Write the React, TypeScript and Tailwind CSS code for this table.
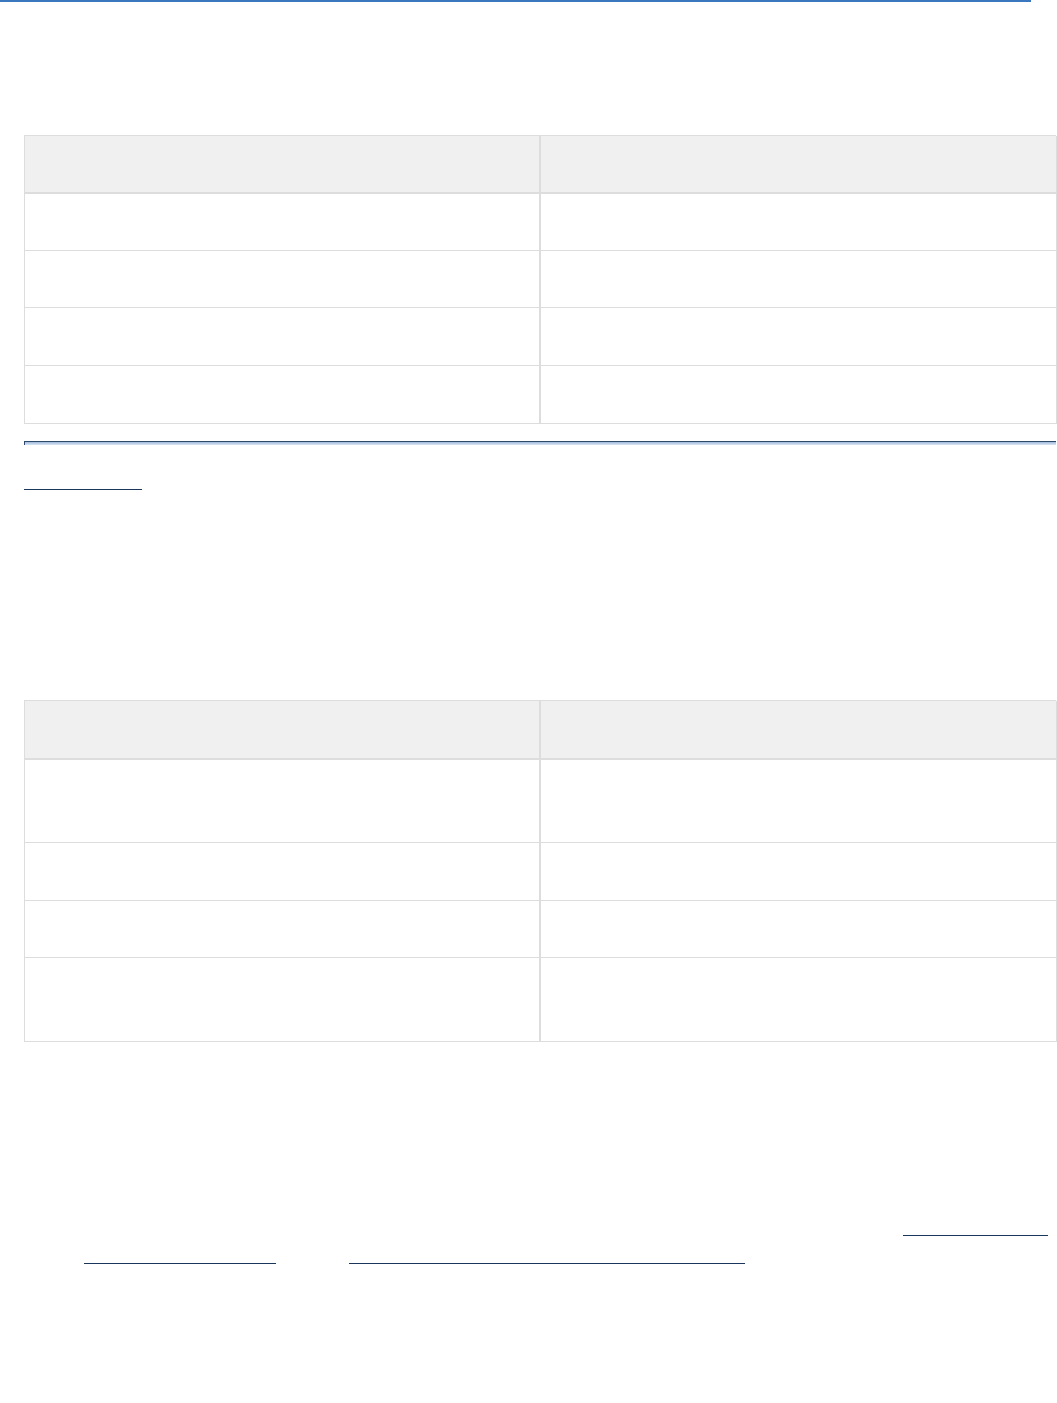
const table1 = {
  header: 'h-[58px]',
  rows: ['h-[57px]', 'h-[57px]', 'h-[58px]', 'h-[58px]'],
};

const table2 = {
  header: 'h-[59px]',
  rows: ['h-[83px]', 'h-[58px]', 'h-[57px]', 'h-[84px]'],
};

function DataTable({ header, rows }: { header: string; rows: string[] }) {
  return (
    <div className="w-[1032px] border-t border-l border-[#dddddd]">
      <div className="grid grid-cols-[516px_516px]">
        <div className={`${header} bg-[#f0f0f0] border-r-2 border-b-2 border-[#dddddd]`} />
        <div className={`${header} bg-[#f0f0f0] border-r border-b-2 border-[#dddddd]`} />
      </div>
      {rows.map((h, i) => (
        <div key={i} className="grid grid-cols-[516px_516px]">
          <div className={`${h} bg-white border-r-2 border-b border-[#dddddd]`} />
          <div className={`${h} bg-white border-r border-b border-[#dddddd]`} />
        </div>
      ))}
    </div>
  );
}

export default function App() {
  return (
    <div className="min-h-[1403px] w-[1057px] bg-white font-['Liberation_Sans',Arial,sans-serif]">
      <div className="h-[2px] w-[1031px] bg-[#3a77bf]" />
      <div className="pl-[24px]">
        <div className="mt-[133px]">
          <DataTable header={table1.header} rows={table1.rows} />
        </div>

        {/* section rule */}
        <div className="mt-[17px] w-[1032px] h-[4px] border-t border-l border-[#2d4a6c] bg-gradient-to-b from-[#9fb9d9] to-[#d9e6f4]" />

        <div className="mt-[44px] w-[118px] h-px bg-[#1b365d]" />

        <div className="mt-[210px]">
          <DataTable header={table2.header} rows={table2.rows} />
        </div>

        <div className="mt-[193px] flex">
          <span className="ml-[879px] w-[145px] h-px bg-[#1b365d]" />
        </div>
        <div className="mt-[27px] flex">
          <span className="ml-[60px] w-[192px] h-px bg-[#1b365d]" />
          <span className="ml-[73px] w-[396px] h-px bg-[#1b365d]" />
        </div>
      </div>
    </div>
  );
}
